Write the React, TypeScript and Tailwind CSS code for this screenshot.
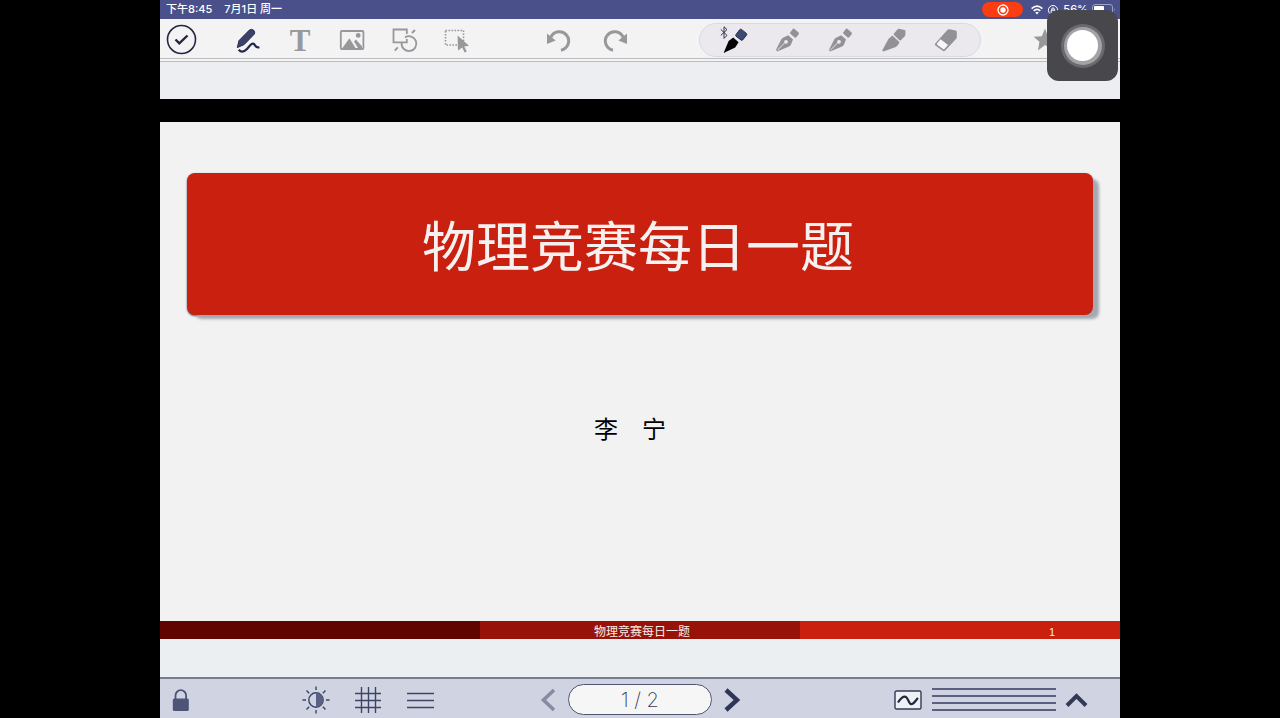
import { useState } from 'react';
import type { ReactNode } from 'react';
import { clsx } from 'clsx';

const TITLE = '物理竞赛每日一题';
const PAGE_COUNT = 2;

type IconProps = { children: ReactNode; className?: string };

function Icon({ children, className }: IconProps) {
  return (
    <svg viewBox="0 0 36 36" fill="none" className={clsx('size-9 shrink-0', className)} aria-hidden="true">
      {children}
    </svg>
  );
}

function ToolButton({ label, children }: { label: string; children: ReactNode }) {
  return (
    <button type="button" aria-label={label} className="flex size-9 shrink-0 items-center justify-center text-[#98989a]">
      {children}
    </button>
  );
}

function FountainPenIcon() {
  return (
    <Icon>
      <path d="M25.2 6.8 29.6 10.6Q30.3 11.4 29.7 12.2L27.2 15.3Q26.4 16.1 25.6 15.4L21.4 11.8Q20.7 11 21.3 10.2L23.8 7Q24.4 6.2 25.2 6.8Z" fill="#929296" />
      <path d="M19.2 13.2 24 17.4 22 22.6Q21.4 24 20 24.6L8.2 29.6 6.8 28.2 12.2 17.6Q13 16 14.6 15.4Z" fill="#929296" />
      <path d="M8 28.5 16 20.5" stroke="#e9e7ec" strokeWidth="1" />
      <circle cx="17" cy="19.8" r="1.9" fill="#eceaef" />
    </Icon>
  );
}

function StatusBar() {
  return (
    <header className="flex h-[19px] shrink-0 items-center bg-[#49508a] pl-1.5 pr-1 font-['Inter','Noto_Sans_CJK_SC',sans-serif] text-[11px] leading-none font-medium text-white">
      <span>下午8:45</span>
      <span className="ml-3">7月1日 周一</span>
      <div className="ml-auto flex h-full items-center">
        <span className="flex h-[15px] w-[41px] items-center justify-center rounded-full bg-[#fb3d12]">
          <svg viewBox="0 0 12 12" className="size-3" aria-label="录屏">
            <circle cx="6" cy="6" r="5" fill="none" stroke="white" strokeWidth="1.3" />
            <circle cx="6" cy="6" r="2.7" fill="white" />
          </svg>
        </span>
        <svg viewBox="0 0 12 10" className="ml-2 h-2.5 w-3" fill="none" stroke="white" strokeWidth="1.7" aria-label="Wi-Fi">
          <path d="M.6 3.6Q6-1.2 11.4 3.6M2.7 5.8Q6 2.9 9.3 5.8" />
          <path d="M6 9.4 4.2 7.5Q6 6.2 7.8 7.5Z" fill="white" stroke="none" />
        </svg>
        <svg viewBox="0 0 12 12" className="ml-1 size-3" fill="none" stroke="white" aria-label="方向锁定">
          <path d="M3 9.6A4.6 4.6 0 1 1 9 9.6M4.2 6.2H7.8V9H4.2ZM4.8 6V4.6Q6 3 7.2 4.6V6" />
        </svg>
        <span className="ml-1">56%</span>
        <svg viewBox="0 0 24 11" className="ml-1 h-[11px] w-6" aria-label="电池">
          <rect x=".5" y=".5" width="20" height="10" rx="2.5" fill="none" stroke="#9da1c4" />
          <rect x="2" y="2" width="10" height="7" rx="1" fill="white" />
          <path d="M22 4V7.5Q23.5 5.7 22 4Z" fill="#9da1c4" />
        </svg>
      </div>
    </header>
  );
}

function Toolbar() {
  return (
    <nav className="flex h-[43px] shrink-0 items-center border-b-4 border-double border-[#bdbdc0] bg-[#f3f3f4] pt-0.5 pl-1.5 pr-[59px]">
      <button type="button" aria-label="完成" className="flex size-[31px] shrink-0 items-center justify-center">
        <svg viewBox="0 0 31 31" fill="none" stroke="#24263f" className="size-[31px]">
          <circle cx="15.5" cy="15.5" r="14" strokeWidth="1.6" />
          <path d="M9.5 15.5 13.3 19.3 21.5 11.5" strokeWidth="2.4" />
        </svg>
      </button>

      <div className="ml-[33px] flex gap-4">
        <ToolButton label="画笔">
          <Icon>
            <path d="M7.3 25.6 9 18.6 19.4 8Q21.6 6.6 23.6 8.2 25.4 10 24.4 12L14.2 22.6Z" fill="#3b4168" stroke="#292e50" strokeWidth="1" />
            <path d="M8.8 27.6C10.6 30.4 13.8 30.4 16.4 27.6 19.4 24.4 22.2 19.8 24.2 22.2 26 24.4 26 26.2 29.4 25.2" stroke="#22264a" strokeWidth="2.2" />
          </Icon>
        </ToolButton>
        <ToolButton label="文字">
          <span className="pt-0.5 font-['Liberation_Serif',serif] text-[31px] leading-9 font-bold">T</span>
        </ToolButton>
        <ToolButton label="图片">
          <Icon>
            <rect x="6.8" y="9" width="22.6" height="18" rx="1" stroke="currentColor" strokeWidth="1.8" />
            <path d="M8.5 26 15.4 16.2 21.6 26ZM20 19.6 21.8 17.4 28 24.2V26H24Z" fill="currentColor" />
            <circle cx="24.2" cy="13.4" r="2.4" fill="currentColor" />
          </Icon>
        </ToolButton>
        <ToolButton label="形状">
          <Icon>
            <path d="M20.8 12V7.5H7.5V20.3H20.8V17" stroke="currentColor" strokeWidth="1.8" />
            <path d="M19 15.4A7.4 7.4 0 1 1 15.6 21" stroke="currentColor" strokeWidth="1.8" />
            <path d="M26 11 29 8M8.8 28.6 11.8 25.4" stroke="currentColor" strokeWidth="2" />
          </Icon>
        </ToolButton>
        <ToolButton label="选择">
          <Icon>
            <rect x="7.5" y="8.5" width="18" height="14.5" stroke="currentColor" strokeWidth="1.6" strokeDasharray="1.6 1.4" />
            <path d="M19.6 13.4 31 23.8 26.2 24.4 28.8 29.6 26.6 30.6 24.2 25.4 20 28.4Z" fill="currentColor" />
          </Icon>
        </ToolButton>
      </div>

      <div className="mx-auto flex gap-5">
        <ToolButton label="撤销">
          <Icon>
            <path d="M9.8 15.4A9.3 9.3 0 1 1 20 28.2" stroke="currentColor" strokeWidth="3" />
            <path d="M6 11.4V22L14.6 18.6Z" fill="currentColor" />
          </Icon>
        </ToolButton>
        <ToolButton label="重做">
          <Icon className="-scale-x-100">
            <path d="M9.8 15.4A9.3 9.3 0 1 1 20 28.2" stroke="currentColor" strokeWidth="3" />
            <path d="M6 11.4V22L14.6 18.6Z" fill="currentColor" />
          </Icon>
        </ToolButton>
      </div>

      <div className="flex h-[34px] w-[282px] items-center justify-between rounded-full border border-[#dadadd] bg-[#ebe9ee] px-4">
        <ToolButton label="蓝牙笔">
          <Icon>
            <path d="M4.8 7.4 11 13.4 8 16.4V4.8L11 7.6 4.8 13.4" stroke="#30334b" strokeWidth="1" />
            <path d="M25.4 7.4 30.4 11.4Q31.2 12.2 30.6 13L26.6 18Q25.8 18.8 25 18L20 14.2Q19.2 13.4 20 12.6L23.8 7.6Q24.6 6.8 25.4 7.4Z" fill="#3f4a72" stroke="#283051" />
            <path d="M17.2 15.4 22.6 20.2 19.2 25.4 7.6 31 12.6 19Z" fill="#050508" />
          </Icon>
        </ToolButton>
        <ToolButton label="钢笔一">
          <FountainPenIcon />
        </ToolButton>
        <ToolButton label="钢笔二">
          <FountainPenIcon />
        </ToolButton>
        <ToolButton label="荧光笔">
          <Icon>
            <path d="M22.6 7.2Q23.2 6.5 24 6.7L29.6 8Q30.5 8.2 30.4 9V12.6Q30.4 13.6 29.8 14.2L25.8 18.2Q25 18.8 24.2 18L19 13Q18.4 12.2 19 11.4Z" fill="#929296" />
            <path d="M17.4 13.6 24.6 20.2 22.6 23.6Q22 24.6 20.8 25L8.4 29.6 7.2 28.6 12.6 18.4Q13 17.4 14 16.6Z" fill="#929296" />
          </Icon>
        </ToolButton>
        <ToolButton label="橡皮擦">
          <Icon>
            <path d="M19.6 7.8Q20.4 6.9 21.6 7.2L27.6 8.6Q28.8 9 28.8 10.2V15Q28.8 16 28.2 16.8L17.2 28.6Q16 29.6 14.8 28.8L7.4 23.6Q6.4 22.6 7.2 21.6Z" fill="#929296" />
            <path d="M12.6 17.2 20 23 16.4 27Q15.8 27.6 15 27L9.2 22.8Q8.6 22.2 9 21.6Z" fill="#f7f6f8" />
          </Icon>
        </ToolButton>
      </div>

      <div className="ml-11 flex">
        <ToolButton label="收藏">
          <Icon>
            <path d="M20 6.5 22.8 14.2 31 14.5 24.6 19.6 26.8 27.6 20 23 13 28.4 14.4 19.8 8.6 14.8 16.8 14.2Z" fill="currentColor" />
          </Icon>
        </ToolButton>
      </div>
    </nav>
  );
}

function Slide({ page }: { page: number }) {
  return (
    <main className="flex grow flex-col bg-[#f2f2f2]">
      <div className="mx-[27px] mt-[51px] flex h-[142px] items-center justify-center rounded-lg bg-[#c9200f] pt-2 pr-1 shadow-[7px_5px_3px_-1px_#a3a8b1,0_1px_2px_#46506a]">
        <h1 className="text-[54px] leading-none text-[#f5f1f0]">{TITLE}</h1>
      </div>
      <p className="mt-[97px] pr-5 text-center text-[24px] leading-9 text-black">李　宁</p>
      <footer className="mt-auto grid h-[18px] grid-cols-3 text-[12px] leading-[18px] text-[#fbeee4]">
        <div className="bg-[#600500]" />
        <div className="bg-[#971208] pt-0.5 pl-1 text-center">{TITLE}</div>
        <div className="bg-[#c9200f] pr-[65px] pt-0.5 text-right text-[11px]">{page}</div>
      </footer>
    </main>
  );
}

function BottomBar({ page, onChange }: { page: number; onChange: (page: number) => void }) {
  return (
    <nav className="grid h-[41px] shrink-0 grid-cols-[1fr_auto_1fr] items-center border-t-2 border-[#777d91] bg-[#d0d4e2] pt-0.5 text-[#3d4463]">
      <div className="flex items-center pl-[3px]">
        <button type="button" aria-label="锁定">
          <Icon>
            <path d="M12.5 18V13.5A5.3 5.3 0 0 1 23.1 13.5V18" stroke="#4d5475" strokeWidth="1.8" />
            <rect x="9.8" y="16.4" width="16" height="12.6" rx="1.5" fill="#4d5475" />
          </Icon>
        </button>
        <div className="ml-[99px] flex gap-4">
          <button type="button" aria-label="亮度">
            <Icon>
              <circle cx="18" cy="18" r="7.2" stroke="currentColor" strokeWidth="1.4" />
              <path d="M18 10.8A7.2 7.2 0 0 1 18 25.2Z" fill="#596286" />
              <path d="M18 4.5V8M18 28V31.5M4.5 18H8M28 18H31.5M8.5 8.5 11.2 11.2M24.8 24.8 27.5 27.5M8.5 27.5 11.2 24.8M24.8 11.2 27.5 8.5" stroke="currentColor" strokeWidth="1.4" />
            </Icon>
          </button>
          <button type="button" aria-label="网格">
            <Icon>
              <path d="M5 11.5H31M5 18.5H31M5 25.5H31M11.5 5V31M18.5 5V31M25.5 5V31" stroke="currentColor" strokeWidth="1.4" />
            </Icon>
          </button>
          <button type="button" aria-label="目录">
            <Icon>
              <path d="M5 11.5H32M5 18.5H32M5 25.5H32" stroke="currentColor" strokeWidth="1.4" />
            </Icon>
          </button>
        </div>
      </div>

      <div className="flex items-center gap-2">
        <button type="button" aria-label="上一页" onClick={() => onChange(Math.max(1, page - 1))}>
          <svg viewBox="0 0 24 24" className="size-6" fill="none" stroke="#858ba0" strokeWidth="3.6">
            <path d="M18 2 7.5 12 18 22" />
          </svg>
        </button>
        <button type="button" aria-label="页码" className="h-[31px] w-36 rounded-full border border-[#50566e] bg-[#f6f6f7] font-['Inter','Noto_Sans_CJK_SC',sans-serif] text-[20px] leading-7 font-extralight text-[#363a50]">
          {page} / {PAGE_COUNT}
        </button>
        <button type="button" aria-label="下一页" onClick={() => onChange(Math.min(PAGE_COUNT, page + 1))}>
          <svg viewBox="0 0 24 24" className="size-6" fill="none" stroke="#2f3557" strokeWidth="4.4">
            <path d="M6 2 17 12 6 22" />
          </svg>
        </button>
      </div>

      <div className="flex items-center justify-end pr-8">
        <button type="button" aria-label="笔迹样式">
          <svg viewBox="0 0 28 20" className="h-5 w-7" fill="none">
            <rect x="1" y="1" width="26" height="18" rx="1.5" fill="#eef0f5" stroke="#343a52" strokeWidth="1.4" />
            <path d="M4 12.5C7 8 10 5 12.5 7.5 15 10 15 16 19 13.5 21 12 22 10 24 8" stroke="#22273d" strokeWidth="2.2" />
          </svg>
        </button>
        <button type="button" aria-label="线条粗细" className="ml-2.5 flex w-[124px] flex-col gap-[5px]">
          <span className="h-0.5 w-full bg-[#596080]" />
          <span className="h-0.5 w-full bg-[#596080]" />
          <span className="h-0.5 w-full bg-[#596080]" />
          <span className="h-0.5 w-full bg-[#596080]" />
        </button>
        <button type="button" aria-label="展开" className="ml-2">
          <svg viewBox="0 0 24 24" className="size-6" fill="none" stroke="#343a56" strokeWidth="4">
            <path d="M3 17.5 12.5 8 22 17.5" />
          </svg>
        </button>
      </div>
    </nav>
  );
}

export default function App() {
  const [page, setPage] = useState(1);

  return (
    <div className="flex min-h-screen justify-center bg-black font-['Liberation_Sans','Noto_Sans_CJK_SC',sans-serif]">
      <div className="relative flex w-3/4 flex-col">
        <StatusBar />
        <Toolbar />
        <div className="h-[37px] shrink-0 bg-[#eceef2]" />
        <div className="h-[23px] shrink-0 bg-black" />
        <Slide page={page} />
        <div className="h-[38px] shrink-0 bg-[#eceff2]" />
        <BottomBar page={page} onChange={setPage} />

        {/* floating assistive button */}
        <button
          type="button"
          aria-label="辅助触控"
          className="absolute top-2.5 right-0.5 flex size-[71px] items-center justify-center rounded-xl bg-[#48474b]"
        >
          <span className="flex size-11 items-center justify-center rounded-full bg-[#6a696d]">
            <span className="flex size-[38px] items-center justify-center rounded-full bg-[#a3a2a6]">
              <span className="size-[31px] rounded-full bg-white" />
            </span>
          </span>
        </button>
      </div>
    </div>
  );
}
